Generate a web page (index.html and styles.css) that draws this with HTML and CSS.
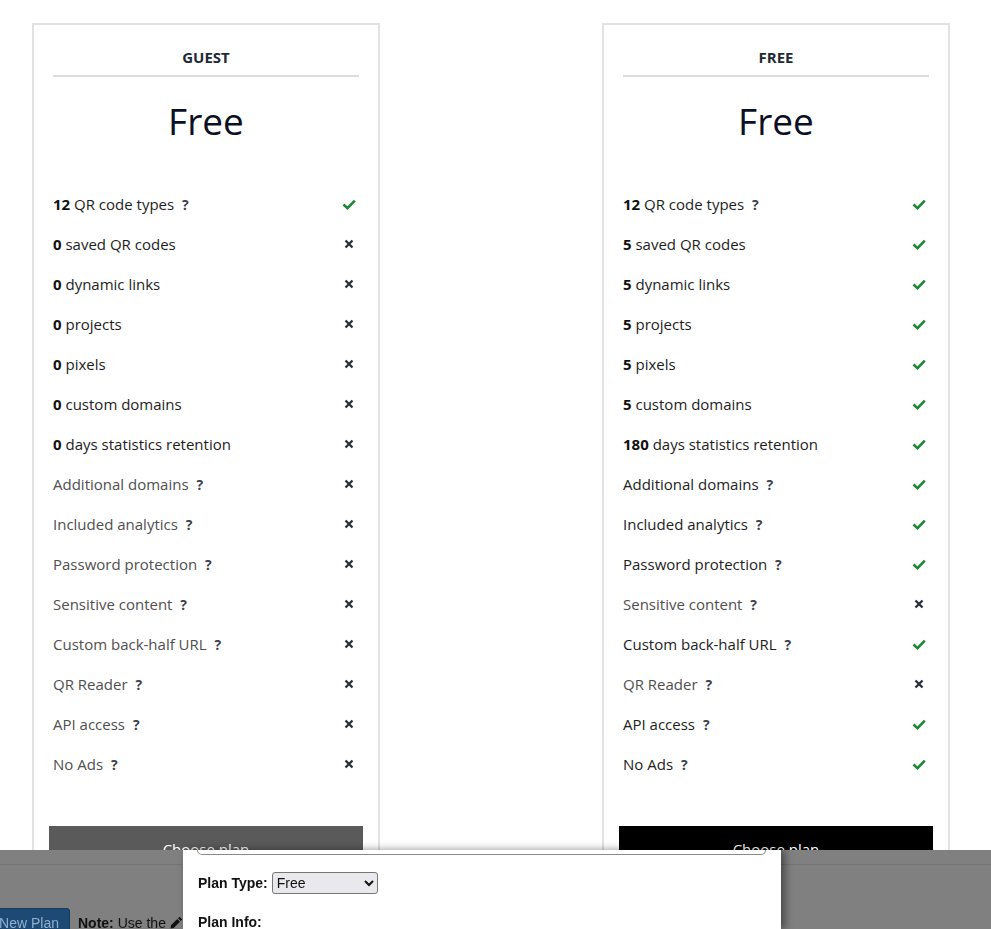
FILE: index.html
```
<!DOCTYPE html>
<html lang="en">
<head>
    <meta charset="UTF-8">
    <meta name="viewport" content="width=device-width, initial-scale=1.0">
    <title>Plans</title>
    <link rel="stylesheet" href="styles.css">
</head>
<body>

    <div class="plans">
        <!-- Guest plan -->
        <div class="plan">
            <div class="plan-name">GUEST</div>
            <div class="plan-price">Free</div>
            <ul class="features">
                <li><span class="feature-text"><b>12</b> QR code types <span class="help">?</span></span><span class="mark"><svg class="ok" viewBox="0 0 14 11"><path d="M1.5 5.5 L5.5 9.2 L12.8 1.6"/></svg></span></li>
                <li><span class="feature-text"><b>0</b> saved QR codes</span><span class="mark"><svg class="no" viewBox="0 0 10 10"><path d="M1.5 1.5 L8.5 8.5 M8.5 1.5 L1.5 8.5"/></svg></span></li>
                <li><span class="feature-text"><b>0</b> dynamic links</span><span class="mark"><svg class="no" viewBox="0 0 10 10"><path d="M1.5 1.5 L8.5 8.5 M8.5 1.5 L1.5 8.5"/></svg></span></li>
                <li><span class="feature-text"><b>0</b> projects</span><span class="mark"><svg class="no" viewBox="0 0 10 10"><path d="M1.5 1.5 L8.5 8.5 M8.5 1.5 L1.5 8.5"/></svg></span></li>
                <li><span class="feature-text"><b>0</b> pixels</span><span class="mark"><svg class="no" viewBox="0 0 10 10"><path d="M1.5 1.5 L8.5 8.5 M8.5 1.5 L1.5 8.5"/></svg></span></li>
                <li><span class="feature-text"><b>0</b> custom domains</span><span class="mark"><svg class="no" viewBox="0 0 10 10"><path d="M1.5 1.5 L8.5 8.5 M8.5 1.5 L1.5 8.5"/></svg></span></li>
                <li><span class="feature-text"><b>0</b> days statistics retention</span><span class="mark"><svg class="no" viewBox="0 0 10 10"><path d="M1.5 1.5 L8.5 8.5 M8.5 1.5 L1.5 8.5"/></svg></span></li>
                <li class="off"><span class="feature-text">Additional domains <span class="help">?</span></span><span class="mark"><svg class="no" viewBox="0 0 10 10"><path d="M1.5 1.5 L8.5 8.5 M8.5 1.5 L1.5 8.5"/></svg></span></li>
                <li class="off"><span class="feature-text">Included analytics <span class="help">?</span></span><span class="mark"><svg class="no" viewBox="0 0 10 10"><path d="M1.5 1.5 L8.5 8.5 M8.5 1.5 L1.5 8.5"/></svg></span></li>
                <li class="off"><span class="feature-text">Password protection <span class="help">?</span></span><span class="mark"><svg class="no" viewBox="0 0 10 10"><path d="M1.5 1.5 L8.5 8.5 M8.5 1.5 L1.5 8.5"/></svg></span></li>
                <li class="off"><span class="feature-text">Sensitive content <span class="help">?</span></span><span class="mark"><svg class="no" viewBox="0 0 10 10"><path d="M1.5 1.5 L8.5 8.5 M8.5 1.5 L1.5 8.5"/></svg></span></li>
                <li class="off"><span class="feature-text">Custom back-half URL <span class="help">?</span></span><span class="mark"><svg class="no" viewBox="0 0 10 10"><path d="M1.5 1.5 L8.5 8.5 M8.5 1.5 L1.5 8.5"/></svg></span></li>
                <li class="off"><span class="feature-text">QR Reader <span class="help">?</span></span><span class="mark"><svg class="no" viewBox="0 0 10 10"><path d="M1.5 1.5 L8.5 8.5 M8.5 1.5 L1.5 8.5"/></svg></span></li>
                <li class="off"><span class="feature-text">API access <span class="help">?</span></span><span class="mark"><svg class="no" viewBox="0 0 10 10"><path d="M1.5 1.5 L8.5 8.5 M8.5 1.5 L1.5 8.5"/></svg></span></li>
                <li class="off"><span class="feature-text">No Ads <span class="help">?</span></span><span class="mark"><svg class="no" viewBox="0 0 10 10"><path d="M1.5 1.5 L8.5 8.5 M8.5 1.5 L1.5 8.5"/></svg></span></li>
            </ul>
            <button class="choose choose-muted">Choose plan</button>
        </div>

        <!-- Free plan -->
        <div class="plan">
            <div class="plan-name">FREE</div>
            <div class="plan-price">Free</div>
            <ul class="features">
                <li><span class="feature-text"><b>12</b> QR code types <span class="help">?</span></span><span class="mark"><svg class="ok" viewBox="0 0 14 11"><path d="M1.5 5.5 L5.5 9.2 L12.8 1.6"/></svg></span></li>
                <li><span class="feature-text"><b>5</b> saved QR codes</span><span class="mark"><svg class="ok" viewBox="0 0 14 11"><path d="M1.5 5.5 L5.5 9.2 L12.8 1.6"/></svg></span></li>
                <li><span class="feature-text"><b>5</b> dynamic links</span><span class="mark"><svg class="ok" viewBox="0 0 14 11"><path d="M1.5 5.5 L5.5 9.2 L12.8 1.6"/></svg></span></li>
                <li><span class="feature-text"><b>5</b> projects</span><span class="mark"><svg class="ok" viewBox="0 0 14 11"><path d="M1.5 5.5 L5.5 9.2 L12.8 1.6"/></svg></span></li>
                <li><span class="feature-text"><b>5</b> pixels</span><span class="mark"><svg class="ok" viewBox="0 0 14 11"><path d="M1.5 5.5 L5.5 9.2 L12.8 1.6"/></svg></span></li>
                <li><span class="feature-text"><b>5</b> custom domains</span><span class="mark"><svg class="ok" viewBox="0 0 14 11"><path d="M1.5 5.5 L5.5 9.2 L12.8 1.6"/></svg></span></li>
                <li><span class="feature-text"><b>180</b> days statistics retention</span><span class="mark"><svg class="ok" viewBox="0 0 14 11"><path d="M1.5 5.5 L5.5 9.2 L12.8 1.6"/></svg></span></li>
                <li><span class="feature-text">Additional domains <span class="help">?</span></span><span class="mark"><svg class="ok" viewBox="0 0 14 11"><path d="M1.5 5.5 L5.5 9.2 L12.8 1.6"/></svg></span></li>
                <li><span class="feature-text">Included analytics <span class="help">?</span></span><span class="mark"><svg class="ok" viewBox="0 0 14 11"><path d="M1.5 5.5 L5.5 9.2 L12.8 1.6"/></svg></span></li>
                <li><span class="feature-text">Password protection <span class="help">?</span></span><span class="mark"><svg class="ok" viewBox="0 0 14 11"><path d="M1.5 5.5 L5.5 9.2 L12.8 1.6"/></svg></span></li>
                <li class="off"><span class="feature-text">Sensitive content <span class="help">?</span></span><span class="mark"><svg class="no" viewBox="0 0 10 10"><path d="M1.5 1.5 L8.5 8.5 M8.5 1.5 L1.5 8.5"/></svg></span></li>
                <li><span class="feature-text">Custom back-half URL <span class="help">?</span></span><span class="mark"><svg class="ok" viewBox="0 0 14 11"><path d="M1.5 5.5 L5.5 9.2 L12.8 1.6"/></svg></span></li>
                <li class="off"><span class="feature-text">QR Reader <span class="help">?</span></span><span class="mark"><svg class="no" viewBox="0 0 10 10"><path d="M1.5 1.5 L8.5 8.5 M8.5 1.5 L1.5 8.5"/></svg></span></li>
                <li><span class="feature-text">API access <span class="help">?</span></span><span class="mark"><svg class="ok" viewBox="0 0 14 11"><path d="M1.5 5.5 L5.5 9.2 L12.8 1.6"/></svg></span></li>
                <li><span class="feature-text">No Ads <span class="help">?</span></span><span class="mark"><svg class="ok" viewBox="0 0 14 11"><path d="M1.5 5.5 L5.5 9.2 L12.8 1.6"/></svg></span></li>
            </ul>
            <button class="choose">Choose plan</button>
        </div>
    </div>

    <!-- Admin bar (dimmed behind the modal) -->
    <div class="admin-bar">
        <div class="admin-line"></div>
        <div class="admin-row">
            <button class="new-plan">New Plan</button>
            <span class="note"><b>Note:</b> Use the
                <svg class="pencil" viewBox="0 0 14 14"><path d="M10.2 0.8 L13.2 3.8 L11.6 5.4 L8.6 2.4 Z M7.8 3.2 L10.8 6.2 L4 13 L0.6 13.4 L1 10 Z"/></svg>
            </span>
        </div>
    </div>

    <!-- Edit plan modal -->
    <div class="modal">
        <div class="modal-edge"></div>
        <div class="modal-body">
            <div class="field">
                <label for="planType">Plan Type:</label>
                <select id="planType">
                    <option>Free</option>
                    <option>Guest</option>
                    <option>Pro</option>
                </select>
            </div>
            <div class="field">
                <label>Plan Info:</label>
            </div>
        </div>
    </div>

</body>
</html>
```

FILE: styles.css
```
body {
    margin: 0;
    padding: 0;
    background-color: #fff;
    font-family: 'Open Sans', sans-serif;
    color: #212529;
}

.plans {
    display: flex;
    gap: 222px;
    padding: 23px 0 0 32px;
}

.plan {
    width: 344px;
    border: 2px solid #e2e2e2;
    border-bottom: none;
    padding: 0 0 60px;
}

.plan-name {
    margin: 0 19px;
    padding: 22px 0 7px;
    border-bottom: 2px solid #dedede;
    text-align: center;
    font-size: 15px;
    font-weight: 700;
    line-height: 21px;
    color: #1f2a37;
}

.plan-price {
    margin-top: 20px;
    text-align: center;
    font-size: 37px;
    line-height: 48px;
    color: #0b1024;
}

.features {
    list-style: none;
    margin: 39px 0 0;
    padding: 0 19px;
}

.features li {
    display: flex;
    align-items: center;
    justify-content: space-between;
    height: 40px;
    font-size: 15px;
    color: #1d1d1d;
}

.features li.off {
    color: #4f4f4f;
}

.features b {
    font-weight: 700;
    color: #111;
}

.help {
    margin-left: 4px;
    font-weight: 700;
    font-size: 14px;
    color: #3b414b;
}

.mark {
    display: flex;
    justify-content: center;
    width: 16px;
    margin-right: 2px;
}

.mark svg.ok {
    width: 14px;
    height: 11px;
    fill: none;
    stroke: #1a8a34;
    stroke-width: 2.6;
}

.mark svg.no {
    width: 10px;
    height: 10px;
    fill: none;
    stroke: #2b323c;
    stroke-width: 2.4;
}

.choose {
    display: block;
    width: 314px;
    height: 45px;
    margin: 42px 0 0 15px;
    border: none;
    background-color: #000;
    color: #fff;
    font-family: 'Open Sans', sans-serif;
    font-size: 15px;
    cursor: pointer;
}

.choose-muted {
    background-color: #5a5a5a;
}

/* Dimmed admin area at the bottom */
.admin-bar {
    position: fixed;
    top: 850px;
    left: 0;
    right: 0;
    bottom: 0;
    background-color: #808080;
    font-family: 'Liberation Sans', Arial, sans-serif;
}

.admin-line {
    height: 1px;
    margin-top: 14px;
    background-color: #747474;
}

.admin-row {
    display: flex;
    align-items: center;
    gap: 8px;
    margin-top: 43px;
}

.new-plan {
    width: 82px;
    height: 30px;
    margin-left: -12px;
    padding: 0;
    border: 1px solid #163c5e;
    border-radius: 3px;
    background-color: #1c4a74;
    color: #8fb0cf;
    font-family: 'Liberation Sans', Arial, sans-serif;
    font-size: 14px;
}

.note {
    font-size: 14px;
    color: #111;
}

.pencil {
    width: 13px;
    height: 13px;
    fill: #111;
    vertical-align: -1px;
}

/* Modal */
.modal {
    position: fixed;
    top: 850px;
    left: 183px;
    width: 598px;
    bottom: 0;
    background-color: #fff;
    box-shadow: 4px 0 8px rgba(0, 0, 0, 0.45);
    font-family: 'Liberation Sans', Arial, sans-serif;
}

.modal-edge {
    height: 4px;
    margin: 0 15px 0 14px;
    border: 1px solid #8a8a8a;
    border-top: none;
    border-radius: 0 0 6px 6px;
}

.modal-body {
    padding: 16px 15px 0;
}

.field {
    display: flex;
    align-items: center;
    gap: 4px;
    height: 24px;
    margin-bottom: 15px;
}

.field label {
    font-size: 14px;
    font-weight: 700;
    color: #111;
}

.field select {
    width: 106px;
    height: 22px;
    border: 1px solid #767676;
    border-radius: 3px;
    background-color: #e9e9ed;
    font-family: 'Liberation Sans', Arial, sans-serif;
    font-size: 14px;
    color: #111;
}
```
